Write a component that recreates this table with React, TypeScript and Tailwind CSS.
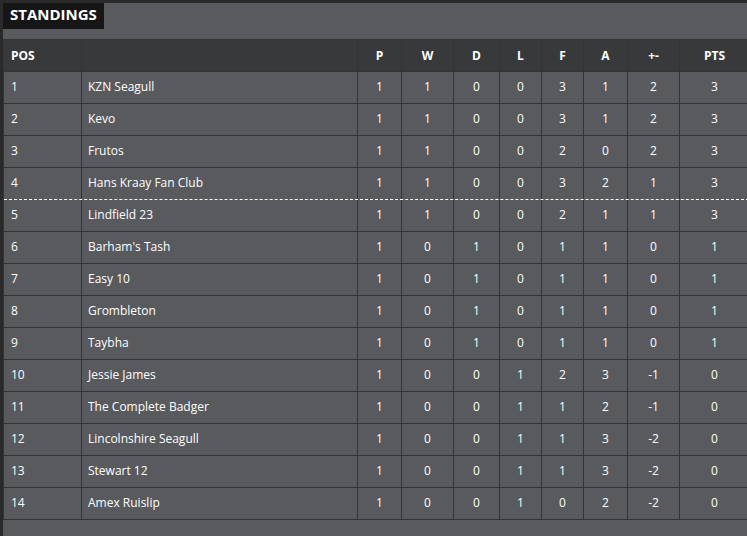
import type { FC } from 'react';

type Row = [number, string, number, number, number, number, number, number, number, number];

const rows: Row[] = [
  [1, 'KZN Seagull', 1, 1, 0, 0, 3, 1, 2, 3],
  [2, 'Kevo', 1, 1, 0, 0, 3, 1, 2, 3],
  [3, 'Frutos', 1, 1, 0, 0, 2, 0, 2, 3],
  [4, 'Hans Kraay Fan Club', 1, 1, 0, 0, 3, 2, 1, 3],
  [5, 'Lindfield 23', 1, 1, 0, 0, 2, 1, 1, 3],
  [6, "Barham's Tash", 1, 0, 1, 0, 1, 1, 0, 1],
  [7, 'Easy 10', 1, 0, 1, 0, 1, 1, 0, 1],
  [8, 'Grombleton', 1, 0, 1, 0, 1, 1, 0, 1],
  [9, 'Taybha', 1, 0, 1, 0, 1, 1, 0, 1],
  [10, 'Jessie James', 1, 0, 0, 1, 2, 3, -1, 0],
  [11, 'The Complete Badger', 1, 0, 0, 1, 1, 2, -1, 0],
  [12, 'Lincolnshire Seagull', 1, 0, 0, 1, 1, 3, -2, 0],
  [13, 'Stewart 12', 1, 0, 0, 1, 1, 3, -2, 0],
  [14, 'Amex Ruislip', 1, 0, 0, 1, 0, 2, -2, 0],
];

const cols = 'grid grid-cols-[78px_276px_44px_52px_46px_42px_42px_44px_52px_70px]';
const heads = ['P', 'W', 'D', 'L', 'F', 'A', '+-', 'PTS'];

const StandingsTable: FC = () => (
  <div className="w-[746px] border-l border-t border-[#323437]">
    <div className={`${cols} h-[32px] bg-[#38393b] border-b border-[#323437] font-bold`}>
      <div className="flex items-center pl-[7px] border-r border-[#323437]">POS</div>
      <div className="border-r border-[#323437]" />
      {heads.map((h) => (
        <div key={h} className="flex items-center justify-center border-r border-[#323437]">
          {h}
        </div>
      ))}
    </div>
    {rows.map((r) => (
      <div
        key={r[0]}
        className={`${cols} h-[32px] ${
          r[0] === 4 ? 'border-b border-dashed border-b-white' : 'border-b border-[#323437]'
        }`}
      >
        <div className="flex items-center pl-[7px] pb-[2px] border-r border-[#323437]">{r[0]}</div>
        <div className="flex items-center pl-[6px] pb-[2px] border-r border-[#323437]">{r[1]}</div>
        {r.slice(2).map((v, i) => (
          <div key={i} className="flex items-center justify-center pb-[2px] border-r border-[#323437]">
            {v}
          </div>
        ))}
      </div>
    ))}
  </div>
);

export default function App() {
  return (
    <div className="w-[747px] h-[536px] overflow-hidden bg-[#2a2a2a] pl-[3px] pt-[3px] font-['Open_Sans',sans-serif] text-[12px] text-white">
      <div className="h-full bg-[#585a5e] flex flex-col">
        <div className="flex">
          <div className="bg-[#161616] w-[101px] h-[26px] pl-[7px] pt-[1px] text-[15px] leading-[20px] font-bold text-white">
            STANDINGS
          </div>
        </div>
        <div className="h-[10px]" />
        <StandingsTable />
      </div>
    </div>
  );
}
